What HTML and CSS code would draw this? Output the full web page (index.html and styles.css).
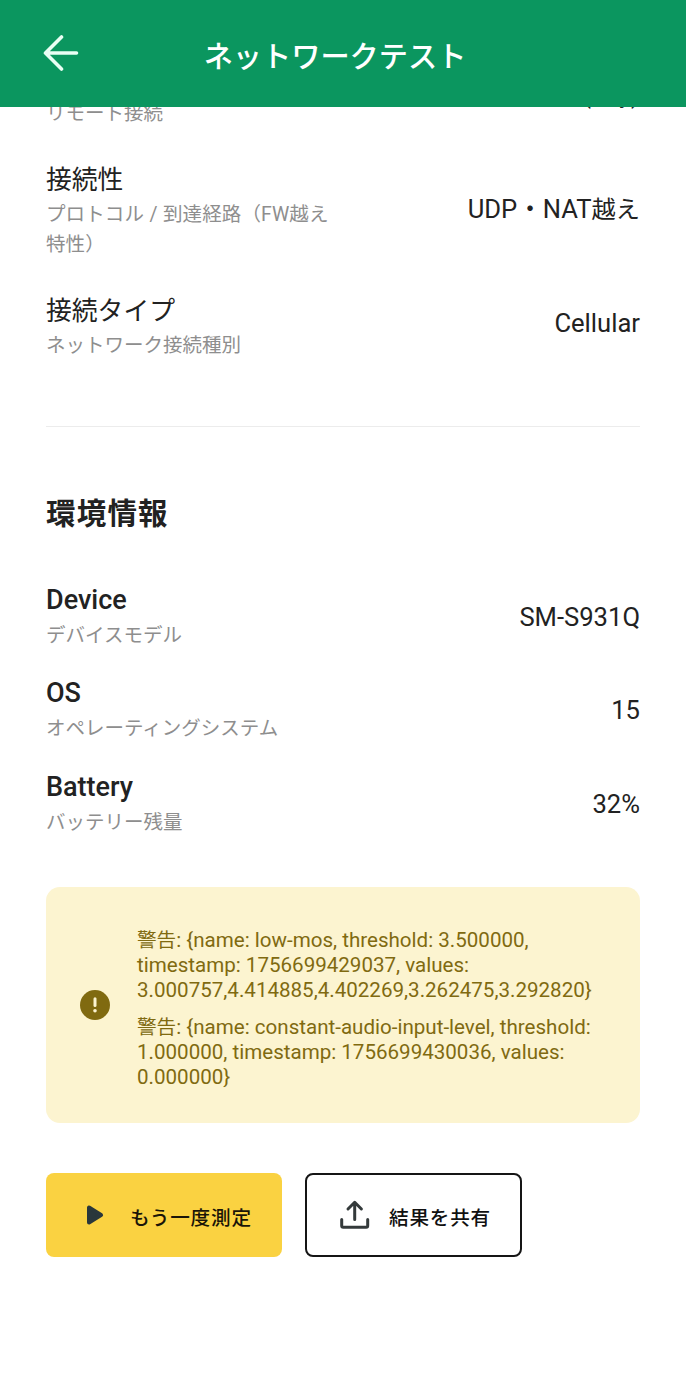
FILE: index.html
```
<!DOCTYPE html>
<html lang="ja">
<head>
    <meta charset="UTF-8">
    <meta name="viewport" content="width=device-width, initial-scale=1.0">
    <title>ネットワークテスト</title>
    <link rel="stylesheet" href="styles.css">
</head>
<body>
    <header class="app-bar">
        <button class="back" aria-label="戻る">
            <svg width="36" height="36" viewBox="0 0 36 36">
                <path d="M18.5 2 L2.5 18 L18.5 34 M3 18 H33.5"/>
            </svg>
        </button>
        <h1>ネットワークテスト</h1>
    </header>

    <main>
        <!-- Network -->
        <section class="network">
            <div class="row row-scrolled">
                <p class="desc">リモート接続</p>
                <span class="value">(any)</span>
            </div>
            <div class="row row-protocol">
                <div class="info">
                    <h3>接続性</h3>
                    <p class="desc">プロトコル / 到達経路（FW越え特性）</p>
                </div>
                <span class="value">UDP・NAT<span class="kanji">越え</span></span>
            </div>
            <div class="row row-type">
                <div class="info">
                    <h3>接続タイプ</h3>
                    <p class="desc">ネットワーク接続種別</p>
                </div>
                <span class="value">Cellular</span>
            </div>
        </section>

        <!-- Environment -->
        <section class="environment">
            <h2>環境情報</h2>
            <div class="row">
                <div class="info">
                    <h3>Device</h3>
                    <p class="desc">デバイスモデル</p>
                </div>
                <span class="value">SM-S931Q</span>
            </div>
            <div class="row">
                <div class="info">
                    <h3>OS</h3>
                    <p class="desc">オペレーティングシステム</p>
                </div>
                <span class="value">15</span>
            </div>
            <div class="row">
                <div class="info">
                    <h3>Battery</h3>
                    <p class="desc">バッテリー残量</p>
                </div>
                <span class="value">32%</span>
            </div>
        </section>

        <!-- Warnings -->
        <div class="warning">
            <svg class="warning-icon" width="30" height="30" viewBox="0 0 30 30">
                <circle cx="15" cy="15" r="15" fill="#806a10"/>
                <path d="M15 8.7 V15.6" stroke="#fcf4d0" stroke-width="3" stroke-linecap="round"/>
                <circle cx="15" cy="20.8" r="1.8" fill="#fcf4d0"/>
            </svg>
            <div class="warning-text">
                <p><span class="level">警告</span>: {name: low-mos, threshold: 3.500000, timestamp: 1756699429037, values: 3.000757,4.414885,4.402269,3.262475,3.292820}</p>
                <p><span class="level">警告</span>: {name: constant-audio-input-level, threshold: 1.000000, timestamp: 1756699430036, values: 0.000000}</p>
            </div>
        </div>

        <div class="actions">
            <button class="btn btn-primary">
                <svg width="18" height="20" viewBox="0 0 18 20">
                    <path d="M3 2.5 V17.5 L15 10 Z" fill="#29373b" stroke="#29373b" stroke-width="4" stroke-linejoin="round"/>
                </svg>
                <span>もう一度測定</span>
            </button>
            <button class="btn btn-outline">
                <svg width="30" height="30" viewBox="0 0 30 30">
                    <path d="M14.7 19.5 V2.5 M8 9 L14.7 2.3 L21.4 9 M1.7 19.5 V25.7 Q1.7 27.2 3.2 27.2 H26.2 Q27.7 27.2 27.7 25.7 V19.5" fill="none" stroke="#343a3b" stroke-width="3" stroke-linecap="round" stroke-linejoin="round"/>
                </svg>
                <span>結果を共有</span>
            </button>
        </div>
    </main>
</body>
</html>
```
FILE: styles.css
```
* {
    box-sizing: border-box;
    margin: 0;
    padding: 0;
}
body {
    font-family: Roboto, "Noto Sans CJK JP", sans-serif;
    background: #fff;
    color: #222;
    height: 1400px;
    overflow: hidden;
}
.app-bar {
    display: grid;
    grid-template-columns: 120px 1fr 136px;
    align-items: center;
    height: 107px;
    background: #0b965f;
    color: #fff;
    position: relative;
    z-index: 1;
}
.back {
    border: none;
    background: none;
    height: 37px;
    padding-left: 43px;
    padding-bottom: 1px;
    text-align: left;
}
.back svg {
    display: block;
    fill: none;
    stroke: #e9fff4;
    stroke-width: 3.6;
    stroke-linecap: round;
    stroke-linejoin: round;
}
h1 {
    font-size: 29.2px;
    font-weight: 500;
    line-height: 40px;
    text-align: center;
    padding-top: 7px;
}
main {
    padding: 0 46px;
}
.row {
    display: flex;
    justify-content: space-between;
    align-items: center;
}
.row-scrolled {
    height: 30px;
    margin-top: -8px;
    margin-bottom: 32px;
}
.row-scrolled .value {
    align-self: flex-start;
    margin-top: -24px;
}
.info {
    width: 297px;
}
h3 {
    font-size: 27px;
    font-weight: 500;
    line-height: 38px;
    padding-bottom: 2px;
}
.network h3 {
    font-size: 25.8px;
    font-weight: 400;
    line-height: 39px;
    padding-bottom: 0;
}
.desc {
    font-size: 19.5px;
    line-height: 30px;
    color: #8e8e8e;
}
.value {
    font-size: 25.6px;
    line-height: 38px;
    white-space: nowrap;
}
.kanji {
    font-size: 24.2px;
}
.row-protocol .desc {
    letter-spacing: 0.1px;
    word-spacing: 0.5px;
}
.row-protocol .value {
    padding-bottom: 3px;
}
.row-type .value {
    padding-bottom: 8px;
}
.network {
    height: 328px;
    border-bottom: 1px solid #ececec;
}
.row-type {
    margin-top: 32px;
}
.environment {
    padding-top: 66px;
}
h2 {
    font-size: 29.5px;
    font-weight: 700;
    line-height: 42px;
    letter-spacing: 1.2px;
    margin-bottom: 46px;
}
.environment .row {
    margin-bottom: 23.3px;
}
.environment .value {
    padding-top: 2px;
}
.warning {
    display: flex;
    align-items: center;
    gap: 27px;
    height: 236px;
    margin-top: 49.4px;
    padding: 0 34px;
    border-radius: 14px;
    background: #fcf4d0;
    color: #806a10;
}
.warning-icon {
    flex: none;
}
.warning-text {
    flex: 1;
    padding-top: 8px;
    font-size: 20.57px;
    line-height: 25px;
}
.warning-text p + p {
    margin-top: 12.5px;
}
.level {
    font-size: 19.6px;
}
.actions {
    display: flex;
    gap: 23px;
    margin-top: 50px;
}
.btn {
    display: flex;
    align-items: center;
    height: 84px;
    border: none;
    border-radius: 8px;
    font-family: inherit;
    font-size: 19.6px;
    font-weight: 500;
    letter-spacing: 0.8px;
    color: #1a1508;
}
.btn span {
    padding-top: 4px;
}
.btn-primary {
    width: 236px;
    padding-left: 40px;
    gap: 26px;
    background: #fad241;
}
.btn-outline {
    width: 217px;
    padding-left: 33px;
    gap: 19px;
    border: 2px solid #151515;
    background: #fff;
    color: #111;
}
```
